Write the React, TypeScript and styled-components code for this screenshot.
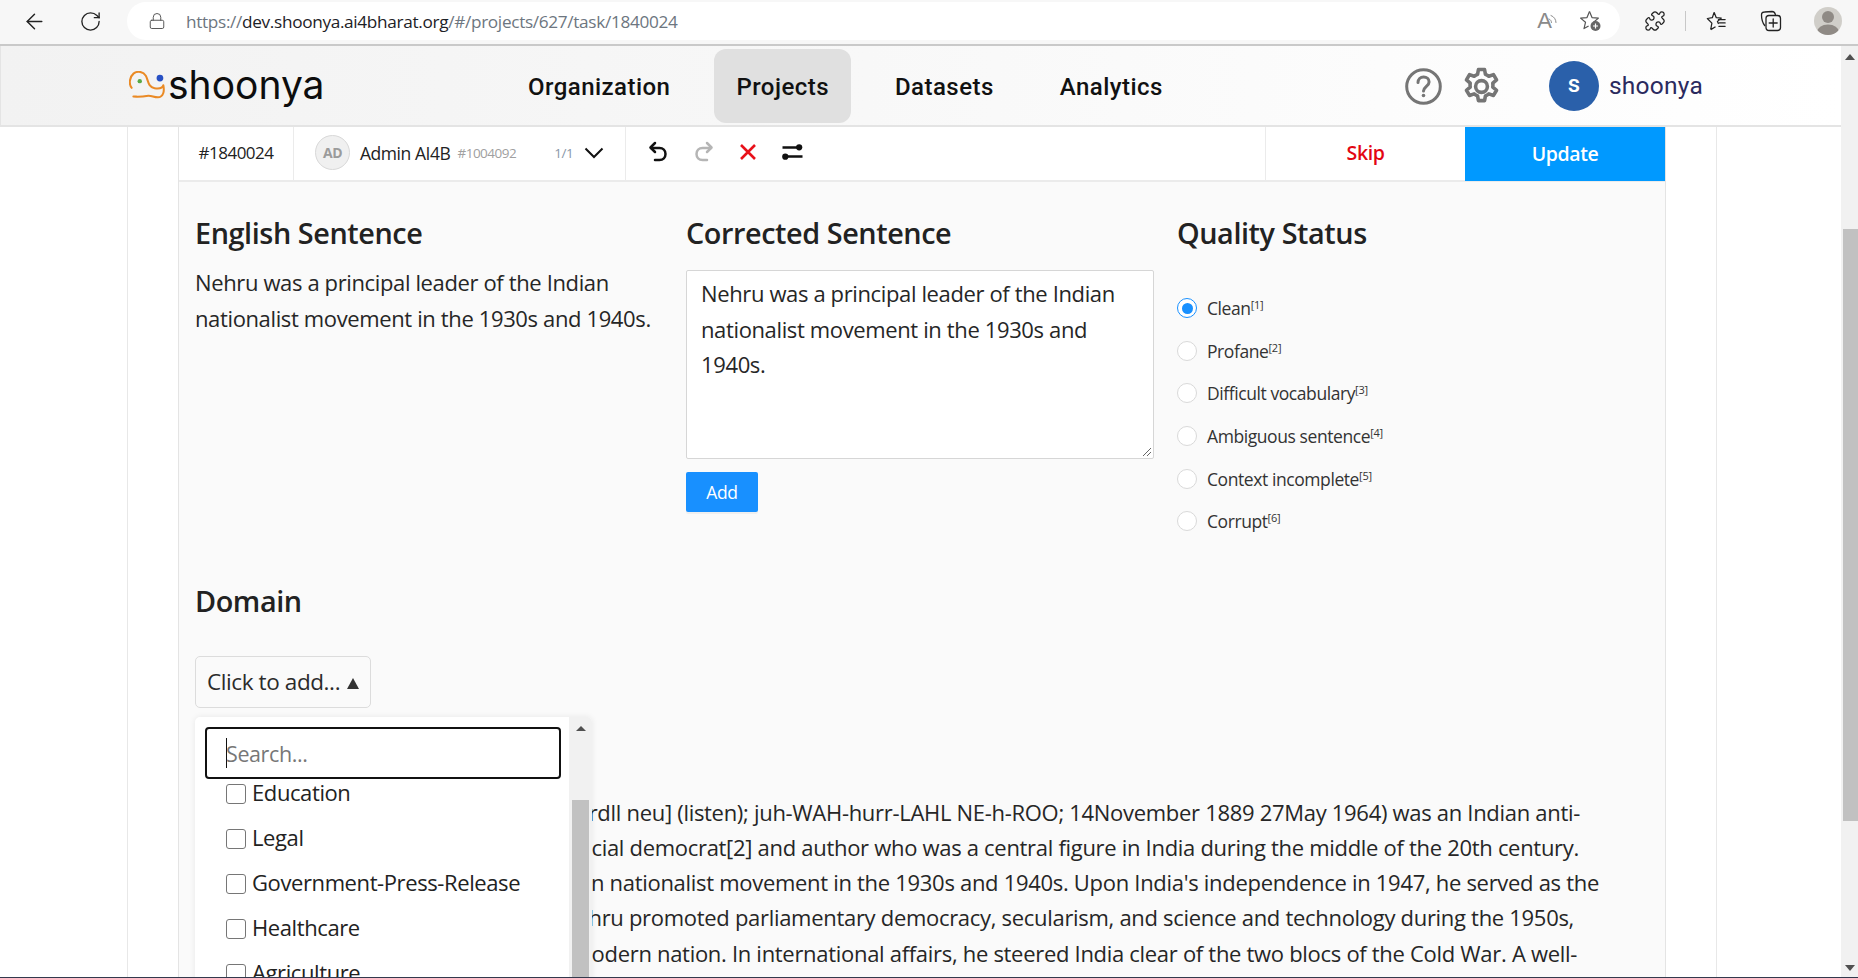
import React from "react";
import styled, { createGlobalStyle } from "styled-components";
import { ArrowLeft, RotateCw, Lock, Puzzle } from "lucide-react";

const ui = `"Open Sans", "Noto Sans", "Liberation Sans", sans-serif`;

const Global = createGlobalStyle`
  html, body { margin: 0; padding: 0; height: 100%; overflow: hidden; background: #fff; }
  #root { height: 100%; }
  * { box-sizing: border-box; }
`;

const Shell = styled.div`
  height: 978px; display: flex; flex-direction: column; overflow: hidden;
  font-family: ${ui}; border-bottom: 1px solid #333a4d;
`;
const BrowserBar = styled.div`
  height: 46px; flex: none; background: #f7f7f7; border-bottom: 2px solid #c9c9c9;
  display: flex; align-items: center; padding: 0 16px 2px 22px; color: #222;
`;
const NavIcon = styled.span<{ $mr: number; $ml?: number; $c?: string }>`
  display: inline-flex; align-items: center; justify-content: center;
  margin-right: ${p => p.$mr}px; margin-left: ${p => p.$ml || 0}px; color: ${p => p.$c || "#222"};
`;
const AddressPill = styled.div`
  width: 1493px; height: 38px; margin-left: 25px; background: #fff; border-radius: 19px;
  display: flex; align-items: center; padding: 0 17px 0 21px; flex: none;
`;
const Url = styled.div`
  flex: 1; margin-left: 20px; font-size: 17.2px; letter-spacing: -0.32px; color: #6d7680; white-space: nowrap;
  font-family: ${ui};
  b { font-weight: 400; color: #1d2126; }
`;
const ReadAloud = styled.span`
  font-size: 22px; color: #8a8a8a; font-weight: 300; margin-right: -4px; line-height: 1;
  font-family: "Liberation Sans", sans-serif;
`;
const BarSep = styled.span`
  width: 1px; height: 20px; background: #c8c8c8; margin: 0 18px 0 19px;
`;
const Profile = styled.div`
  width: 28px; height: 28px; border-radius: 50%; background: #d0cec9; overflow: hidden;
  margin-left: 31px; flex: none;
`;

const Stage = styled.div`
  flex: 1; display: flex; min-height: 0;
`;
const Page = styled.div`
  flex: 1; min-width: 0; display: flex; flex-direction: column; overflow: hidden;
`;
const AppHeader = styled.header`
  height: 81px; flex: none; border-bottom: 2px solid #e4e4e4; border-left: 1px solid #e4e4e4;
  background: linear-gradient(90deg, #f2f2f2 0%, #f7f7f7 40%, #fcfcfc 75%, #fff 100%);
  display: flex; align-items: center; padding-left: 128px;
`;
const Logo = styled.div`
  display: flex; align-items: center; width: 377px; flex: none;
`;
const LogoText = styled.span`
  font-family: Inter, "Noto Sans", sans-serif; font-size: 39px; font-weight: 400; color: #0d0d0d;
  margin-left: 2px; letter-spacing: 0; line-height: 1; position: relative; top: -1px;
`;
const Nav = styled.nav`
  display: flex; gap: 22px; align-items: center; height: 100%;
`;
const NavItem = styled.div<{ $active?: boolean }>`
  height: 74px; padding: 2px 22px 0; display: flex; align-items: center; border-radius: 12px;
  font-family: Roboto, sans-serif; font-weight: 500; font-size: 24px; letter-spacing: 0.46px; color: #111;
  background: ${p => (p.$active ? "#e0e0e0" : "transparent")};
`;
const HeaderRight = styled.div`
  margin-left: auto; display: flex; align-items: center; padding-right: 138px; color: #757575;
`;
const Avatar = styled.div`
  width: 50px; height: 50px; border-radius: 50%; background: #2a60aa; color: #fff;
  display: flex; align-items: center; justify-content: center;
  font-family: Roboto, sans-serif; font-weight: 500; font-size: 24px; margin-left: 46px; padding-bottom: 3px;
`;
const UserName = styled.span`
  font-family: Roboto, sans-serif; font-size: 24.5px; letter-spacing: 0.25px; color: #2b2a5e; margin-left: 10px;
`;
const Container = styled.div`
  flex: 1; min-height: 0; margin-left: 127px; width: 1590px; padding: 0 50px;
  border-left: 1px solid #e8e8e8; border-right: 1px solid #e8e8e8; overflow: hidden;
`;
const Card = styled.div`
  height: 100%; border-left: 1px solid #e4e4e4; border-right: 1px solid #e4e4e4; background: #fafafa;
`;
const Toolbar = styled.div`
  height: 55px; background: #fff; border-bottom: 2px solid #ebebeb; display: flex; align-items: stretch;
`;
const TaskId = styled.div`
  width: 115px; display: flex; align-items: center; justify-content: center; font-size: 17px; padding-bottom: 2px;
  letter-spacing: -0.5px; color: #222; border-right: 1px solid #ebebeb;
`;
const Annotator = styled.div`
  width: 332px; display: flex; align-items: center; padding: 0 0 2px 21px; border-right: 1px solid #ebebeb;
`;
const AvatarSmall = styled.div`
  width: 35px; height: 35px; border-radius: 50%; background: #f0f0f0; border: 1px solid #d8d8d8;
  display: flex; align-items: center; justify-content: center; font-size: 14px; font-weight: 700;
  color: #9b9b9b; letter-spacing: -0.4px; flex: none;
`;
const AdminName = styled.span`
  font-size: 17.5px; color: #222; margin-left: 10px; letter-spacing: -0.45px; white-space: nowrap;
`;
const AdminId = styled.span`
  font-size: 13.5px; color: #a0a0a0; margin-left: 7px; letter-spacing: -0.5px;
`;
const Count = styled.span`
  font-size: 13.5px; color: #8a97a8; margin-left: 38px; letter-spacing: -0.4px;
`;
const Chevron = styled.span`
  display: inline-flex; margin-left: 11px; color: #111;
`;
const Tools = styled.div`
  display: flex; align-items: center; gap: 24px; padding: 0 0 3px 21px; flex: 1;
`;
const SkipBtn = styled.div`
  width: 200px; display: flex; align-items: center; justify-content: center; padding-bottom: 2px;
  border-left: 1px solid #ebebeb; color: #e30613; font-size: 19.5px; font-weight: 600; letter-spacing: -0.4px;
`;
const UpdateBtn = styled.div`
  width: 200px; display: flex; align-items: center; justify-content: center; margin-bottom: -1px; padding-bottom: 2px;
  background: #0099ff; color: #fff; font-size: 19.5px; font-weight: 600; letter-spacing: -0.4px;
`;
const Body = styled.div`
  position: relative; padding: 30px 16px 0 16px;
`;
const Columns = styled.div`
  display: grid; grid-template-columns: 491px 491px 1fr;
`;
const Heading = styled.h2`
  margin: 0; font-size: 28.8px; line-height: 42px; font-weight: 600; color: #222; letter-spacing: -0.42px;
`;
const Sentence = styled.p`
  margin: 10px 0 0; font-size: 22px; line-height: 36px; color: #262626; letter-spacing: -0.37px; width: 470px;
`;
const TextBox = styled.div`
  margin-top: 16px; width: 468px; height: 189px; background: #fff; border: 1px solid #d6d6d6; border-radius: 2px;
  padding: 5px 14px; font-size: 22px; line-height: 35.5px; color: #262626; letter-spacing: -0.37px; position: relative;
`;
const Grip = styled.svg`
  position: absolute; right: 1px; bottom: 1px;
`;
const AddButton = styled.div`
  margin-top: 13px; width: 72px; height: 40px; background: #1890ff; color: #fff; border-radius: 2px;
  display: flex; align-items: center; justify-content: center; font-size: 17.5px; letter-spacing: -0.4px;
  box-shadow: 0 2px 0 rgba(0, 0, 0, 0.045);
`;
const RadioList = styled.div`
  margin-top: 33px; display: flex; flex-direction: column; gap: 0;
`;
const RadioRow = styled.div`
  height: 42.6px; display: flex; align-items: center; font-size: 17.5px; color: #333; letter-spacing: -0.42px;
`;
const RadioDot = styled.span<{ $on?: boolean }>`
  width: 20px; height: 20px; border-radius: 50%; background: #fff; margin-right: 10px; flex: none;
  border: 1px solid ${p => (p.$on ? "#1890ff" : "#d9d9d9")};
  display: flex; align-items: center; justify-content: center;
  &::after { content: ""; width: 11px; height: 11px; border-radius: 50%; background: ${p => (p.$on ? "#1890ff" : "transparent")}; }
`;
const Sup = styled.sup`
  font-size: 11px; line-height: 0; vertical-align: 6px; letter-spacing: -0.2px;
`;
const DomainTitle = styled(Heading)`
  margin-top: 37px;
`;
const DomainTrigger = styled.div`
  margin-top: 34px; width: 176px; height: 52px; border: 1px solid #dcdcdc; border-radius: 5px;
  display: flex; align-items: center; padding: 0 11px; font-size: 22.5px; color: #2b2b2b; letter-spacing: -0.4px; gap: 7px;
  white-space: nowrap;
`;
const Caret = styled.span`
  width: 0; height: 0; border-left: 6px solid transparent; border-right: 6px solid transparent; border-bottom: 11px solid #333; margin-top: 4px;
`;
const Menu = styled.div`
  position: absolute; left: 16px; top: 535px; width: 397px; height: 300px; background: #fff; border-radius: 5px;
  box-shadow: 0 0 6px rgba(0, 0, 0, 0.08); overflow: hidden; display: flex; z-index: 2;
`;
const MenuMain = styled.div`
  flex: 1; padding: 10px 8px 0 10px; min-width: 0; overflow: hidden;
`;
const SearchBox = styled.div`
  height: 52px; border: 2px solid #111; border-radius: 4px; padding: 0 19px; display: flex; align-items: center;
  font-size: 21.5px; color: #777; letter-spacing: -0.4px; background: #fff;
  &::before { content: ""; width: 1px; height: 30px; background: #111; margin-right: -1px; }
`;
const MenuItem = styled.label`
  height: 26px; margin-bottom: 19px; display: flex; align-items: center; padding-left: 21px; font-size: 22px; color: #222; letter-spacing: -0.4px; flex: none;
  white-space: nowrap;
`;
const MenuList = styled.div`
  margin-top: 0;
`;
const Check2 = styled.span`
  width: 20px; height: 20px; border: 1px solid #767676; border-radius: 3px; margin-right: 6px; flex: none; background: #fff; position: relative; top: 2px;
`;
const InnerTrack = styled.div`
  width: 23px; background: #f1f1f1; flex: none; display: flex; flex-direction: column; align-items: center; padding: 9px 0 0 0;
`;
const InnerArrow = styled.span`
  width: 0; height: 0; border-left: 5px solid transparent; border-right: 5px solid transparent; border-bottom: 5px solid #505050;
`;
const InnerThumb = styled.div`
  width: 17px; flex: 1; background: #c1c1c1; margin: 69px 0 0 0;
`;
const Prose = styled.div`
  margin-top: 87px; font-size: 22px; line-height: 35.3px; color: #262626; letter-spacing: -0.3px; overflow: hidden;
`;
const ProseLine = styled.div<{ $end: number }>`
  width: ${p => p.$end}px; display: flex; justify-content: flex-end; white-space: pre;
`;
const PageScroll = styled.div`
  width: 17px; flex: none; background: #f1f1f1; display: flex; flex-direction: column; align-items: center; padding-top: 8px;
`;
const ScrollUp = styled.span`
  width: 0; height: 0; border-left: 5px solid transparent; border-right: 5px solid transparent; border-bottom: 6px solid #505050;
`;
const ScrollDown = styled.span`
  width: 0; height: 0; border-left: 5px solid transparent; border-right: 5px solid transparent; border-top: 6px solid #505050; margin-top: auto; margin-bottom: 6px;
`;
const ScrollThumb = styled.div`
  width: 15px; height: 592px; margin-top: 169px; background: #c1c1c1; align-self: flex-end;
`;

const statuses = [
  ["Clean", "[1]"],
  ["Profane", "[2]"],
  ["Difficult vocabulary", "[3]"],
  ["Ambiguous sentence", "[4]"],
  ["Context incomplete", "[5]"],
  ["Corrupt", "[6]"],
];
const domains = ["Education", "Legal", "Government-Press-Release", "Healthcare", "Agriculture"];
const prose: [number, string][] = [
  [1385, "Hindi: [dvahardll neu] (listen); juh-WAH-hurr-LAHL NE-h-ROO; 14November 1889 27May 1964) was an Indian anti-"],
  [1384, "humanist, social democrat[2] and author who was a central figure in India during the middle of the 20th century."],
  [1404, "leader of the Indian nationalist movement in the 1930s and 1940s. Upon India's independence in 1947, he served as the"],
  [1379, "minister. Nehru promoted parliamentary democracy, secularism, and science and technology during the 1950s,"],
  [1382, "India's arc as a modern nation. In international affairs, he steered India clear of the two blocs of the Cold War. A well-"],
];

const LogoMark = () => (
  <svg width="37" height="29" viewBox="0 0 110 86" fill="none">
    <path d="M8 50C-1 40 1 18 14 7C26-1 42 1 50 14C57 26 56 48 76 51C90 53 100 51 102 42C106 60 102 78 86 78C72 78 66 71 52 74C40 77 26 76 13 76" stroke="#ea8a25" strokeWidth="6" strokeLinecap="round" strokeLinejoin="round" />
    <circle cx="32" cy="30" r="6.5" fill="#57a845" />
    <circle cx="92" cy="21" r="10" fill="#2750c4" />
  </svg>
);

const IconStarAdd = () => (
  <svg width="24" height="24" viewBox="0 0 24 24" fill="none">
    <path d="M10.5 2.5 13 8.6l6.4.5-4.8 4.2" stroke="#555" strokeWidth="1.2" strokeLinejoin="round" />
    <path d="M10.5 2.5 8 8.6l-6.4.5 4.9 4.2L5 19.6l4.6-2.7" stroke="#555" strokeWidth="1.2" strokeLinejoin="round" />
    <circle cx="16.5" cy="17" r="5" fill="#666" />
    <path d="M16.5 14.5v5M14 17h5" stroke="#fff" strokeWidth="1.2" />
  </svg>
);
const IconFav = () => (
  <svg width="24" height="24" viewBox="0 0 24 24" fill="none" stroke="#222" strokeWidth="1.3" strokeLinejoin="round">
    <path d="M10.5 3 12.8 8.6 18 9 14 12.4 15.2 15M7 21l1.2-6.8L3.5 9.4l5.2-.8L10.5 3M7 21l5-3" />
    <path d="M15 10.5h7M16 14h6M15.5 17.5h6.5" strokeLinecap="round" />
  </svg>
);
const IconCollections = () => (
  <svg width="24" height="24" viewBox="0 0 24 24" fill="none" stroke="#222" strokeWidth="1.3" strokeLinejoin="round">
    <path d="M6 17C3.5 14 2.5 9 2.5 6c0-2 1-3 3-3L13 2.5c2 0 3 1 3.5 3.5" />
    <rect x="7" y="6.5" width="14.5" height="15" rx="3" />
    <path d="M14.2 10v8M10.2 14h8" strokeLinecap="round" />
  </svg>
);
const IconAudio = () => (
  <svg width="10" height="14" viewBox="0 0 10 14" fill="none" stroke="#8a8a8a" strokeWidth="1">
    <path d="M1 5c1.500.5 2.500 2 2.500 3.500M3 1.500c3 1 5 4 5 7" strokeLinecap="round" />
  </svg>
);
const IconUndo = ({ color, flip }: { color: string; flip?: boolean }) => (
  <svg width="22" height="22" viewBox="0 0 22 22" fill="none" stroke={color} strokeWidth="2.5" strokeLinecap="round" strokeLinejoin="round" style={flip ? { transform: "scaleX(-1)" } : undefined}>
    <path d="M8 2 3.500 6.500 8 11" />
    <path d="M4 7h8.500c3.500 0 6 2.500 6 6s-2.500 6-6 6H8" />
  </svg>
);
const IconClose = () => (
  <svg width="18" height="18" viewBox="0 0 18 18" stroke="#e8111a" strokeWidth="2.6">
    <path d="M2 2 16 16M16 2 2 16" />
  </svg>
);
const IconSwap = () => (
  <svg width="23" height="20" viewBox="0 0 20 18" fill="#111" stroke="#111">
    <path d="M1 5h16M3 13h16" strokeWidth="2.2" />
    <circle cx="16" cy="4.800" r="2.800" stroke="none" />
    <circle cx="3.500" cy="13.200" r="2.800" stroke="none" />
  </svg>
);
const HelpSvg = styled.svg`
  margin-top: 2px;
`;
const IconHelp = () => (
  <HelpSvg width="37" height="37" viewBox="0 0 37 37" fill="none" stroke="#757575" strokeWidth="3">
    <circle cx="18.500" cy="18.500" r="16.800" />
    <path d="M13 14.500c0-3.300 2.400-5.500 5.600-5.500s5.500 2.100 5.500 4.900c0 4.200-5.600 4.600-5.600 9.100" strokeLinecap="round" />
    <circle cx="18.500" cy="27.500" r="1.800" fill="#757575" stroke="none" />
  </HelpSvg>
);
const GearSvg = styled.svg`
  margin: 2px 0 0 18px;
`;
const IconGear = () => (
  <GearSvg width="43" height="43" viewBox="0 0 24 24" fill="none" stroke="#757575" strokeWidth="2" strokeLinejoin="round">
    <path d="M10.300 2.500h3.400l.5 2.700a7.200 7.200 0 0 1 1.900 1.100l2.600-.9 1.700 2.900-2.100 1.800a7 7 0 0 1 0 2.200l2.100 1.800-1.700 2.900-2.600-.9a7.200 7.200 0 0 1-1.900 1.100l-.5 2.700h-3.400l-.5-2.700a7.200 7.200 0 0 1-1.900-1.100l-2.600.9-1.700-2.900 2.100-1.800a7 7 0 0 1 0-2.200L3.600 8.300l1.700-2.900 2.600.9a7.200 7.200 0 0 1 1.900-1.100z" />
    <circle cx="12" cy="12" r="3.300" />
  </GearSvg>
);

export default function App() {
  return (
    <>
      <Global />
      <Shell>
        <BrowserBar>
          <NavIcon $mr={32}><ArrowLeft size={25} strokeWidth={1.4} /></NavIcon>
          <NavIcon $mr={0}><RotateCw size={23} strokeWidth={1.4} /></NavIcon>
          <AddressPill>
            <NavIcon $mr={0} $c="#555"><Lock size={18} strokeWidth={1.3} /></NavIcon>
            <Url>https://<b>dev.shoonya.ai4bharat.org</b>/#/projects/627/task/1840024</Url>
            <ReadAloud>A</ReadAloud>
            <IconAudio />
            <NavIcon $mr={0} $ml={21}><IconStarAdd /></NavIcon>
          </AddressPill>
          <NavIcon $mr={0} $ml={24}><Puzzle size={22} strokeWidth={1.4} /></NavIcon>
          <BarSep />
          <IconFav />
          <NavIcon $mr={0} $ml={32}><IconCollections /></NavIcon>
          <Profile>
            <svg width="28" height="28" viewBox="0 0 28 28" fill="#8f8a85">
              <circle cx="14" cy="10" r="6" />
              <ellipse cx="14" cy="25" rx="11" ry="7.500" />
            </svg>
          </Profile>
        </BrowserBar>
        <Stage>
          <Page>
            <AppHeader>
              <Logo>
                <LogoMark />
                <LogoText>shoonya</LogoText>
              </Logo>
              <Nav>
                <NavItem>Organization</NavItem>
                <NavItem $active>Projects</NavItem>
                <NavItem>Datasets</NavItem>
                <NavItem>Analytics</NavItem>
              </Nav>
              <HeaderRight>
                <IconHelp />
                <IconGear />
                <Avatar>s</Avatar>
                <UserName>shoonya</UserName>
              </HeaderRight>
            </AppHeader>
            <Container>
              <Card>
                <Toolbar>
                  <TaskId>#1840024</TaskId>
                  <Annotator>
                    <AvatarSmall>AD</AvatarSmall>
                    <AdminName>Admin AI4B</AdminName>
                    <AdminId>#1004092</AdminId>
                    <Count>1/1</Count>
                    <Chevron>
                      <svg width="20" height="12" viewBox="0 0 20 12" fill="none" stroke="#111" strokeWidth="2"><path d="M1.500 1.500 10 10l8.500-8.500" /></svg>
                    </Chevron>
                  </Annotator>
                  <Tools>
                    <IconUndo color="#111" />
                    <IconUndo color="#b5b5b5" flip />
                    <IconClose />
                    <IconSwap />
                  </Tools>
                  <SkipBtn>Skip</SkipBtn>
                  <UpdateBtn>Update</UpdateBtn>
                </Toolbar>
                <Body>
                  <Columns>
                    <div>
                      <Heading>English Sentence</Heading>
                      <Sentence>Nehru was a principal leader of the Indian nationalist movement in the 1930s and 1940s.</Sentence>
                    </div>
                    <div>
                      <Heading>Corrected Sentence</Heading>
                      <TextBox>
                        Nehru was a principal leader of the Indian nationalist movement in the 1930s and 1940s.
                        <Grip width="10" height="10" viewBox="0 0 10 10" stroke="#666" strokeWidth="1"><path d="M1 9 9 1M5 9 9 5" /></Grip>
                      </TextBox>
                      <AddButton>Add</AddButton>
                    </div>
                    <div>
                      <Heading>Quality Status</Heading>
                      <RadioList>
                        {statuses.map(([label, ref], i) => (
                          <RadioRow key={label}>
                            <RadioDot $on={i === 0} />
                            <span>{label}<Sup>{ref}</Sup></span>
                          </RadioRow>
                        ))}
                      </RadioList>
                    </div>
                  </Columns>
                  <DomainTitle>Domain</DomainTitle>
                  <DomainTrigger>Click to add...<Caret /></DomainTrigger>
                  <Menu>
                    <MenuMain>
                      <SearchBox>Search...</SearchBox>
                      <MenuList>
                        {domains.map(d => (
                          <MenuItem key={d}><Check2 />{d}</MenuItem>
                        ))}
                      </MenuList>
                    </MenuMain>
                    <InnerTrack>
                      <InnerArrow />
                      <InnerThumb />
                    </InnerTrack>
                  </Menu>
                  <Prose>
                    {prose.map(([end, text]) => (
                      <ProseLine key={end} $end={end}>{text}</ProseLine>
                    ))}
                  </Prose>
                </Body>
              </Card>
            </Container>
          </Page>
          <PageScroll>
            <ScrollUp />
            <ScrollThumb />
            <ScrollDown />
          </PageScroll>
        </Stage>
      </Shell>
    </>
  );
}
